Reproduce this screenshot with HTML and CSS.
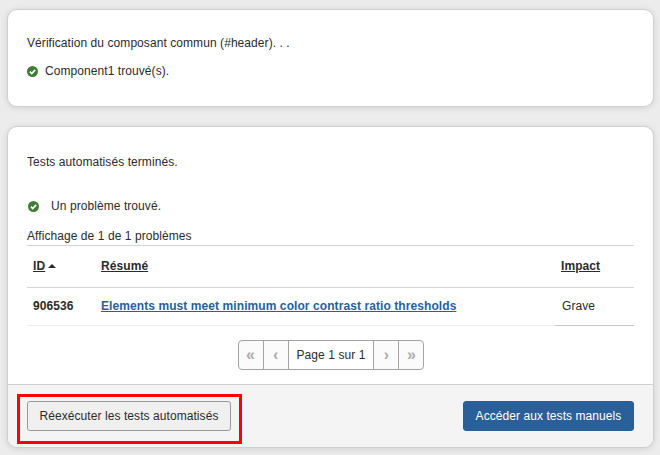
FILE: index.html
```html
<!DOCTYPE html>
<html lang="fr">
<head>
	<meta charset="utf-8">
	<title>Tests automatisés</title>
	<link rel="stylesheet" href="styles.css">
</head>
<body>
	<section class="card card-top">
		<p class="line">Vérification du composant commun (#header). . .</p>
		<p class="status">
			<svg class="check" viewBox="0.5 0.5 11 11"><circle cx="6" cy="6" r="5.5" fill="#3f7d37"/><path d="M3.4 6.2 5.2 8 8.7 4.4" fill="none" stroke="#fff" stroke-width="1.7"/></svg>
			<span>Component1 trouvé(s).</span>
		</p>
	</section>

	<section class="card card-main">
		<div class="card-body">
			<p class="line">Tests automatisés terminés.</p>
			<p class="status status-wide">
				<svg class="check" viewBox="0.5 0.5 11 11"><circle cx="6" cy="6" r="5.5" fill="#3f7d37"/><path d="M3.4 6.2 5.2 8 8.7 4.4" fill="none" stroke="#fff" stroke-width="1.7"/></svg>
				<span>Un problème trouvé.</span>
			</p>
			<p class="count">Affichage de 1 de 1 problèmes</p>
			<table class="issues">
				<thead>
					<tr>
						<th class="col-id"><u>ID</u><span class="sort"></span></th>
						<th class="col-sum"><u>Résumé</u></th>
						<th class="col-impact"><u>Impact</u></th>
					</tr>
				</thead>
				<tbody>
					<tr>
						<td class="col-id"><strong>906536</strong></td>
						<td class="col-sum"><a href="#">Elements must meet minimum color contrast ratio thresholds</a></td>
						<td class="col-impact">Grave</td>
					</tr>
				</tbody>
			</table>
			<div class="pager">
				<button class="page-btn">«</button>
				<button class="page-btn">‹</button>
				<span class="page-label">Page 1 sur 1</span>
				<button class="page-btn">›</button>
				<button class="page-btn">»</button>
			</div>
		</div>
		<div class="card-footer">
			<button class="btn btn-plain">Réexécuter les tests automatisés</button>
			<button class="btn btn-primary">Accéder aux tests manuels</button>
			<div class="highlight"></div>
		</div>
	</section>
</body>
</html>
```

FILE: styles.css
```css
html, body {
	height: 100%;
}
body {
	margin: 0;
	padding: 9px 6px 0 7px;
	box-sizing: border-box;
	overflow: hidden;
	font-family: "Liberation Sans", Arial, sans-serif;
	font-size: 12px;
	letter-spacing: 0.07px;
	color: #2b2b2b;
	background-color: #ececec;
}
p {
	margin: 0;
}
.card {
	background-color: #fff;
	border: 1px solid #cfcfcf;
	border-radius: 10px;
	box-shadow: 0 1px 6px rgba(0, 0, 0, 0.12);
}
.card-top {
	height: 98px;
	box-sizing: border-box;
	padding: 26px 19px 0;
	margin-bottom: 19px;
}
.card-main {
	height: 322px;
	box-sizing: border-box;
	display: flex;
	flex-direction: column;
	overflow: hidden;
}
.card-body {
	flex: 1;
	padding: 28px 19px 0;
}
.line {
	line-height: 14px;
}
.status {
	display: flex;
	align-items: center;
	margin-top: 14px;
	line-height: 14px;
}
.status .check {
	width: 11px;
	height: 11px;
	margin-right: 7px;
}
.status-wide {
	margin-top: 30px;
	padding-left: 1px;
}
.status-wide .check {
	margin-right: 12px;
}
.count {
	margin-top: 16px;
	line-height: 14px;
}
.issues {
	width: 100%;
	margin-top: 2px;
	border-collapse: collapse;
	table-layout: fixed;
}
.issues th {
	height: 42px;
	padding: 0 0 2px 6px;
	box-sizing: border-box;
	text-align: left;
	letter-spacing: 0.08px;
	border-top: 1px solid #d4d4d4;
	border-bottom: 1px solid #d4d4d4;
}
.issues td {
	height: 38px;
	padding: 0 0 2px 6px;
	box-sizing: border-box;
	border-bottom: 1px solid #ececec;
}
.col-id {
	width: 68px;
}
.col-impact {
	width: 79px;
}
.issues td.col-impact {
	padding-left: 7px;
	border-bottom-color: #c8c8c8;
}
.sort {
	display: inline-block;
	margin-left: 3px;
	vertical-align: 2px;
	border-left: 4px solid transparent;
	border-right: 4px solid transparent;
	border-bottom: 4px solid #2b2b2b;
}
.issues a {
	font-weight: bold;
	letter-spacing: 0.08px;
	color: #2a6099;
}
.pager {
	display: flex;
	justify-content: center;
	margin-top: 14px;
	padding-left: 2px;
}
.page-btn, .page-label {
	height: 30px;
	box-sizing: border-box;
	border: 1px solid #a3a3a3;
	margin-left: -1px;
}
.page-btn {
	width: 26px;
	padding: 0;
	font-family: inherit;
	font-size: 16px;
	font-weight: bold;
	color: #ababab;
	background-color: #fbfbfb;
}
.page-btn:first-child {
	border-radius: 4px 0 0 4px;
}
.page-btn:last-child {
	border-radius: 0 4px 4px 0;
}
.page-label {
	display: flex;
	align-items: center;
	padding: 0 8px;
	background-color: #fff;
}
.card-footer {
	position: relative;
	height: 63px;
	box-sizing: border-box;
	display: flex;
	justify-content: space-between;
	align-items: flex-start;
	padding: 16px 19px 0;
	border-top: 1px solid #cfcfcf;
	background-color: #f4f4f4;
}
.btn {
	height: 30px;
	padding: 0;
	font-family: inherit;
	font-size: 12px;
	letter-spacing: 0.07px;
	white-space: nowrap;
	border-radius: 3px;
}
.btn-plain {
	width: 204px;
	color: #2b2b2b;
	background-color: #f0f0f0;
	border: 1px solid #9a9a9a;
}
.btn-primary {
	width: 171px;
	color: #fff;
	background-color: #2a6099;
	border: 1px solid #2a6099;
}
.highlight {
	position: absolute;
	left: 9px;
	top: 9px;
	width: 225px;
	height: 50px;
	box-sizing: border-box;
	border: 3px solid #f00;
}
```
